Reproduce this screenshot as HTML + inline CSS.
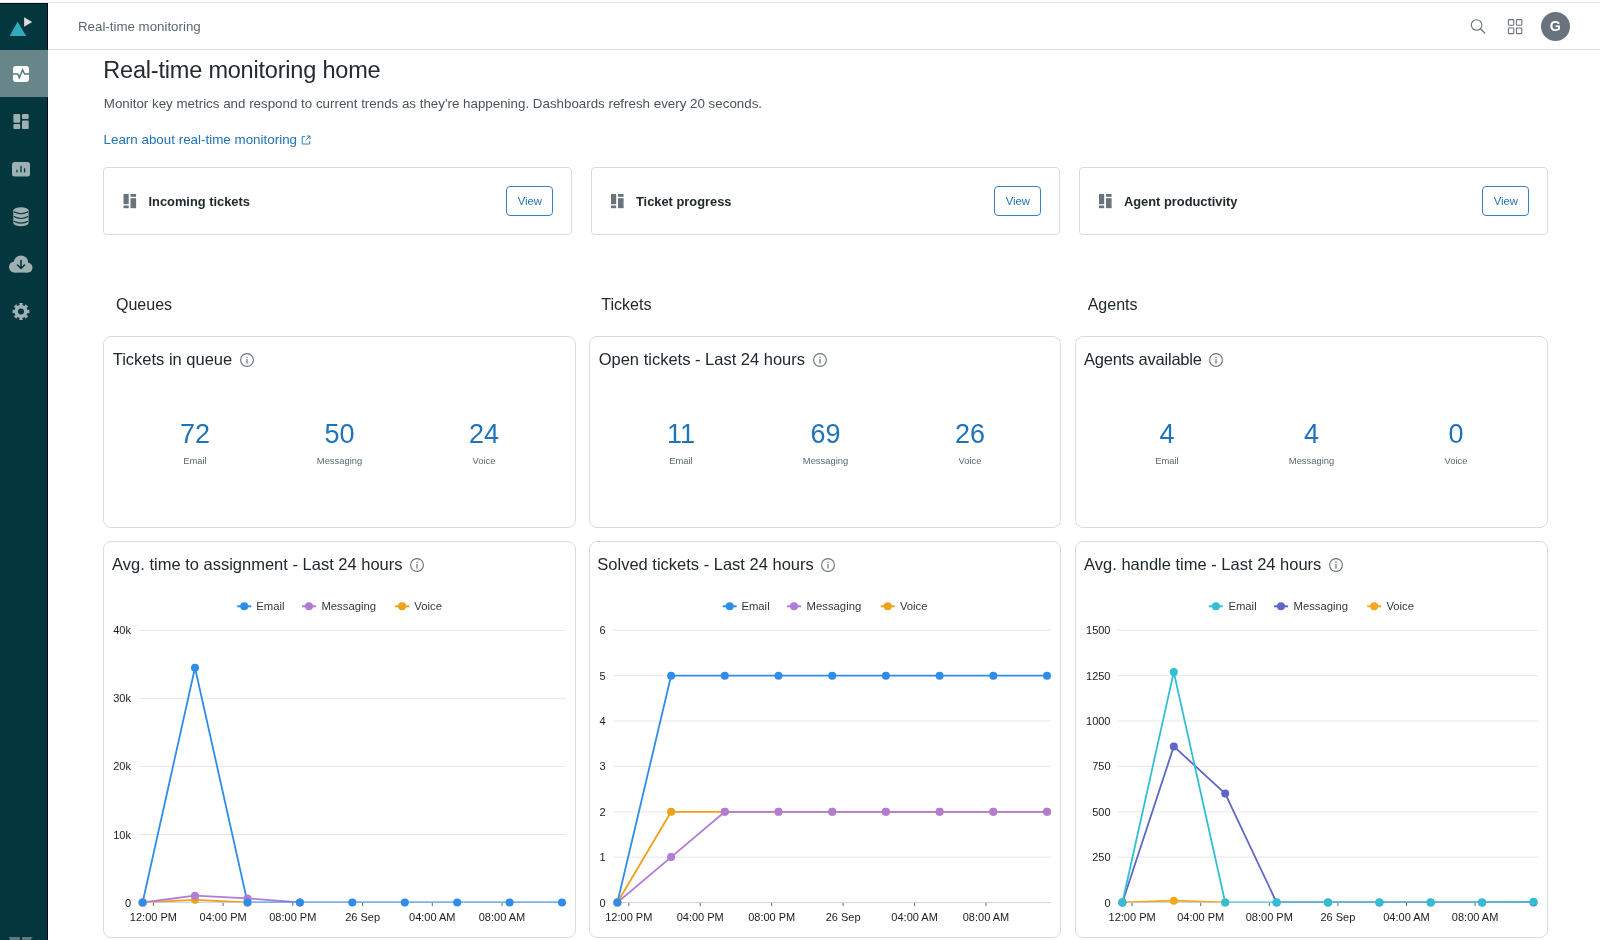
<!DOCTYPE html>
<html><head><meta charset="utf-8"><title>Real-time monitoring</title>
<style>
html,body{margin:0;padding:0;background:#fff;width:1600px;height:940px;overflow:hidden;font-family:"Liberation Sans", sans-serif;}
#root{position:relative;width:1600px;height:940px;overflow:hidden;will-change:transform;}
svg{position:absolute;left:0;top:0;}
</style></head><body><div id="root">
<div style="position:absolute;left:0px;top:2px;width:1600px;height:1px;box-sizing:border-box;background:#e4e7ea"></div>
<div style="position:absolute;left:0px;top:3px;width:48px;height:937px;box-sizing:border-box;background:#03363d;border-right:1px solid #020a18;border-top:1px solid #020e1a"></div>
<div style="position:absolute;left:0px;top:50px;width:48px;height:47px;box-sizing:border-box;background:#68868a"></div>
<div style="position:absolute;left:48px;top:49px;width:1552px;height:1px;box-sizing:border-box;background:#d8dcde"></div>
<div style="position:absolute;top:19.76px;font-size:13.3px;line-height:14.859px;color:#5c6970;font-weight:400;white-space:nowrap;left:78.00px;">Real-time monitoring</div>
<div style="position:absolute;top:57.13px;font-size:23.5px;line-height:26.254px;color:#232b31;font-weight:400;white-space:nowrap;letter-spacing:-0.2px;left:103.30px;">Real-time monitoring home</div>
<div style="position:absolute;top:96.71px;font-size:13.35px;line-height:14.915px;color:#49545c;font-weight:400;white-space:nowrap;left:103.80px;">Monitor key metrics and respond to current trends as they're happening. Dashboards refresh every 20 seconds.</div>
<div style="position:absolute;top:132.77px;font-size:13.4px;line-height:14.970px;color:#1f73b7;font-weight:400;white-space:nowrap;left:103.50px;">Learn about real-time monitoring</div>
<div style="position:absolute;left:103px;top:167px;width:469px;height:68px;box-sizing:border-box;border:1px solid #d8dcde;border-radius:4px"></div>
<div style="position:absolute;top:195.17px;font-size:12.85px;line-height:14.356px;color:#21292e;font-weight:700;white-space:nowrap;left:148.50px;">Incoming tickets</div>
<div style="position:absolute;left:506px;top:186px;width:47px;height:30px;box-sizing:border-box;border:1px solid #3b80c2;border-radius:4px"></div>
<div style="position:absolute;top:194.87px;font-size:11.3px;line-height:12.624px;color:#1f73b7;font-weight:400;white-space:nowrap;left:229.80px;width:600px;text-align:center;">View</div>
<div style="position:absolute;left:591px;top:167px;width:469px;height:68px;box-sizing:border-box;border:1px solid #d8dcde;border-radius:4px"></div>
<div style="position:absolute;top:195.17px;font-size:12.85px;line-height:14.356px;color:#21292e;font-weight:700;white-space:nowrap;left:636.00px;">Ticket progress</div>
<div style="position:absolute;left:994px;top:186px;width:47px;height:30px;box-sizing:border-box;border:1px solid #3b80c2;border-radius:4px"></div>
<div style="position:absolute;top:194.87px;font-size:11.3px;line-height:12.624px;color:#1f73b7;font-weight:400;white-space:nowrap;left:717.80px;width:600px;text-align:center;">View</div>
<div style="position:absolute;left:1079px;top:167px;width:469px;height:68px;box-sizing:border-box;border:1px solid #d8dcde;border-radius:4px"></div>
<div style="position:absolute;top:195.17px;font-size:12.85px;line-height:14.356px;color:#21292e;font-weight:700;white-space:nowrap;left:1124.00px;">Agent productivity</div>
<div style="position:absolute;left:1482px;top:186px;width:47px;height:30px;box-sizing:border-box;border:1px solid #3b80c2;border-radius:4px"></div>
<div style="position:absolute;top:194.87px;font-size:11.3px;line-height:12.624px;color:#1f73b7;font-weight:400;white-space:nowrap;left:1205.80px;width:600px;text-align:center;">View</div>
<div style="position:absolute;top:295.62px;font-size:16px;line-height:17.875px;color:#21292e;font-weight:400;white-space:nowrap;left:116.00px;">Queues</div>
<div style="position:absolute;top:295.62px;font-size:16px;line-height:17.875px;color:#21292e;font-weight:400;white-space:nowrap;left:601.30px;">Tickets</div>
<div style="position:absolute;top:295.62px;font-size:16px;line-height:17.875px;color:#21292e;font-weight:400;white-space:nowrap;left:1087.70px;">Agents</div>
<div style="position:absolute;left:103px;top:336px;width:473px;height:192px;box-sizing:border-box;border:1px solid #d8dcde;border-radius:8px"></div>
<div style="position:absolute;top:349.56px;font-size:16.5px;line-height:18.434px;color:#21292e;font-weight:400;white-space:nowrap;left:112.70px;">Tickets in queue<svg width="14" height="14" viewBox="0 0 14 14" style="position:relative;display:inline-block;vertical-align:-2.2px;margin-left:7.6px"><circle cx="7" cy="7" r="6.4" fill="none" stroke="#68737d" stroke-width="1.1"/><rect x="6.4" y="6" width="1.2" height="4.6" fill="#68737d"/><circle cx="7" cy="4.2" r="0.75" fill="#68737d"/></svg></div>
<div style="position:absolute;top:419.26px;font-size:27px;line-height:30.164px;color:#1f73b7;font-weight:400;white-space:nowrap;left:-105.00px;width:600px;text-align:center;">72</div>
<div style="position:absolute;top:456.49px;font-size:9.4px;line-height:10.502px;color:#5c6970;font-weight:400;white-space:nowrap;left:-105.00px;width:600px;text-align:center;">Email</div>
<div style="position:absolute;top:419.26px;font-size:27px;line-height:30.164px;color:#1f73b7;font-weight:400;white-space:nowrap;left:39.50px;width:600px;text-align:center;">50</div>
<div style="position:absolute;top:456.49px;font-size:9.4px;line-height:10.502px;color:#5c6970;font-weight:400;white-space:nowrap;left:39.50px;width:600px;text-align:center;">Messaging</div>
<div style="position:absolute;top:419.26px;font-size:27px;line-height:30.164px;color:#1f73b7;font-weight:400;white-space:nowrap;left:184.00px;width:600px;text-align:center;">24</div>
<div style="position:absolute;top:456.49px;font-size:9.4px;line-height:10.502px;color:#5c6970;font-weight:400;white-space:nowrap;left:184.00px;width:600px;text-align:center;">Voice</div>
<div style="position:absolute;left:589px;top:336px;width:472px;height:192px;box-sizing:border-box;border:1px solid #d8dcde;border-radius:8px"></div>
<div style="position:absolute;top:349.56px;font-size:16.5px;line-height:18.434px;color:#21292e;font-weight:400;white-space:nowrap;left:598.70px;">Open tickets - Last 24 hours<svg width="14" height="14" viewBox="0 0 14 14" style="position:relative;display:inline-block;vertical-align:-2.2px;margin-left:7.6px"><circle cx="7" cy="7" r="6.4" fill="none" stroke="#68737d" stroke-width="1.1"/><rect x="6.4" y="6" width="1.2" height="4.6" fill="#68737d"/><circle cx="7" cy="4.2" r="0.75" fill="#68737d"/></svg></div>
<div style="position:absolute;top:419.26px;font-size:27px;line-height:30.164px;color:#1f73b7;font-weight:400;white-space:nowrap;left:381.00px;width:600px;text-align:center;">11</div>
<div style="position:absolute;top:456.49px;font-size:9.4px;line-height:10.502px;color:#5c6970;font-weight:400;white-space:nowrap;left:381.00px;width:600px;text-align:center;">Email</div>
<div style="position:absolute;top:419.26px;font-size:27px;line-height:30.164px;color:#1f73b7;font-weight:400;white-space:nowrap;left:525.50px;width:600px;text-align:center;">69</div>
<div style="position:absolute;top:456.49px;font-size:9.4px;line-height:10.502px;color:#5c6970;font-weight:400;white-space:nowrap;left:525.50px;width:600px;text-align:center;">Messaging</div>
<div style="position:absolute;top:419.26px;font-size:27px;line-height:30.164px;color:#1f73b7;font-weight:400;white-space:nowrap;left:670.00px;width:600px;text-align:center;">26</div>
<div style="position:absolute;top:456.49px;font-size:9.4px;line-height:10.502px;color:#5c6970;font-weight:400;white-space:nowrap;left:670.00px;width:600px;text-align:center;">Voice</div>
<div style="position:absolute;left:1075px;top:336px;width:473px;height:192px;box-sizing:border-box;border:1px solid #d8dcde;border-radius:8px"></div>
<div style="position:absolute;top:349.56px;font-size:16.5px;line-height:18.434px;color:#21292e;font-weight:400;white-space:nowrap;letter-spacing:-0.2px;left:1083.90px;">Agents available<svg width="14" height="14" viewBox="0 0 14 14" style="position:relative;display:inline-block;vertical-align:-2.2px;margin-left:7.6px"><circle cx="7" cy="7" r="6.4" fill="none" stroke="#68737d" stroke-width="1.1"/><rect x="6.4" y="6" width="1.2" height="4.6" fill="#68737d"/><circle cx="7" cy="4.2" r="0.75" fill="#68737d"/></svg></div>
<div style="position:absolute;top:419.26px;font-size:27px;line-height:30.164px;color:#1f73b7;font-weight:400;white-space:nowrap;left:867.00px;width:600px;text-align:center;">4</div>
<div style="position:absolute;top:456.49px;font-size:9.4px;line-height:10.502px;color:#5c6970;font-weight:400;white-space:nowrap;left:867.00px;width:600px;text-align:center;">Email</div>
<div style="position:absolute;top:419.26px;font-size:27px;line-height:30.164px;color:#1f73b7;font-weight:400;white-space:nowrap;left:1011.50px;width:600px;text-align:center;">4</div>
<div style="position:absolute;top:456.49px;font-size:9.4px;line-height:10.502px;color:#5c6970;font-weight:400;white-space:nowrap;left:1011.50px;width:600px;text-align:center;">Messaging</div>
<div style="position:absolute;top:419.26px;font-size:27px;line-height:30.164px;color:#1f73b7;font-weight:400;white-space:nowrap;left:1156.00px;width:600px;text-align:center;">0</div>
<div style="position:absolute;top:456.49px;font-size:9.4px;line-height:10.502px;color:#5c6970;font-weight:400;white-space:nowrap;left:1156.00px;width:600px;text-align:center;">Voice</div>
<div style="position:absolute;left:103px;top:541px;width:473px;height:397px;box-sizing:border-box;border:1px solid #d8dcde;border-radius:8px"></div>
<div style="position:absolute;left:589px;top:541px;width:472px;height:397px;box-sizing:border-box;border:1px solid #d8dcde;border-radius:8px"></div>
<div style="position:absolute;left:1075px;top:541px;width:473px;height:397px;box-sizing:border-box;border:1px solid #d8dcde;border-radius:8px"></div>
<div style="position:absolute;top:554.56px;font-size:16.5px;line-height:18.434px;color:#21292e;font-weight:400;white-space:nowrap;left:112.10px;">Avg. time to assignment - Last 24 hours<svg width="14" height="14" viewBox="0 0 14 14" style="position:relative;display:inline-block;vertical-align:-2.2px;margin-left:7.6px"><circle cx="7" cy="7" r="6.4" fill="none" stroke="#68737d" stroke-width="1.1"/><rect x="6.4" y="6" width="1.2" height="4.6" fill="#68737d"/><circle cx="7" cy="4.2" r="0.75" fill="#68737d"/></svg></div>
<div style="position:absolute;top:554.56px;font-size:16.5px;line-height:18.434px;color:#21292e;font-weight:400;white-space:nowrap;left:597.30px;">Solved tickets - Last 24 hours<svg width="14" height="14" viewBox="0 0 14 14" style="position:relative;display:inline-block;vertical-align:-2.2px;margin-left:7.6px"><circle cx="7" cy="7" r="6.4" fill="none" stroke="#68737d" stroke-width="1.1"/><rect x="6.4" y="6" width="1.2" height="4.6" fill="#68737d"/><circle cx="7" cy="4.2" r="0.75" fill="#68737d"/></svg></div>
<div style="position:absolute;top:554.56px;font-size:16.5px;line-height:18.434px;color:#21292e;font-weight:400;white-space:nowrap;left:1084.10px;">Avg. handle time - Last 24 hours<svg width="14" height="14" viewBox="0 0 14 14" style="position:relative;display:inline-block;vertical-align:-2.2px;margin-left:7.6px"><circle cx="7" cy="7" r="6.4" fill="none" stroke="#68737d" stroke-width="1.1"/><rect x="6.4" y="6" width="1.2" height="4.6" fill="#68737d"/><circle cx="7" cy="4.2" r="0.75" fill="#68737d"/></svg></div>
<svg width="1600" height="940" viewBox="0 0 1600 940">
<path d="M9.6 36 L26.2 36 L17.6 21.7 Z" fill="#30aabc"/>
<path d="M24.1 17.2 L32.2 22 L24.1 26.8 Z" fill="#d8dcde"/>
<rect x="13" y="66" width="16" height="16" rx="3" fill="#fff"/>
<path d="M13 74 H17.8 L19.3 77.8 L22.6 69.9 L24.6 74 H29" fill="none" stroke="#587a7e" stroke-width="1.5" stroke-linejoin="miter"/>
<g fill="#9eb0b3"><rect x="13.4" y="114" width="6.8" height="8.7" rx="1"/><rect x="13.4" y="124" width="6.8" height="5" rx="1"/><rect x="22" y="114" width="6.7" height="5" rx="1"/><rect x="22" y="120.6" width="6.7" height="8.4" rx="1"/></g>
<rect x="12" y="162" width="18" height="14.6" rx="2.5" fill="#9eb0b3"/>
<g fill="#03363d"><rect x="16.3" y="169.8" width="1.3" height="2.6"/><rect x="20.3" y="165.9" width="1.3" height="6.5"/><rect x="23.9" y="168.3" width="1.3" height="4.1"/></g>
<path d="M13.3 210.5 A7.65 3.2 0 0 1 28.6 210.5 V223 A7.65 3.2 0 0 1 13.3 223 Z" fill="#9eb0b3"/>
<g fill="none" stroke="#03363d" stroke-width="1.1"><path d="M13.8 211.8 Q21 215.6 28.1 211.8"/><path d="M13.8 216.6 Q21 220.4 28.1 216.6"/><path d="M13.8 221.2 Q21 225 28.1 221.2"/></g>
<g fill="#9eb0b3"><circle cx="21" cy="262.6" r="7.2"/><circle cx="14.6" cy="267" r="5.6"/><circle cx="27.6" cy="267.7" r="4.9"/><rect x="14.6" y="265" width="13" height="7.6"/></g>
<path d="M21 260.5 V268.5 M17.5 265 L21 268.5 L24.5 265" fill="none" stroke="#03363d" stroke-width="1.6" stroke-linecap="round" stroke-linejoin="round"/>
<path d="M29.41 309.71 L29.41 313.29 L27.44 312.93 L26.57 315.05 L28.21 316.18 L25.68 318.71 L24.55 317.07 L22.43 317.94 L22.79 319.91 L19.21 319.91 L19.57 317.94 L17.45 317.07 L16.32 318.71 L13.79 316.18 L15.43 315.05 L14.56 312.93 L12.59 313.29 L12.59 309.71 L14.56 310.07 L15.43 307.95 L13.79 306.82 L16.32 304.29 L17.45 305.93 L19.57 305.06 L19.21 303.09 L22.79 303.09 L22.43 305.06 L24.55 305.93 L25.68 304.29 L28.21 306.82 L26.57 307.95 L27.44 310.07 Z M24 311.5 A3 3 0 1 0 18 311.5 A3 3 0 1 0 24 311.5 Z" fill="#9eb0b3" fill-rule="evenodd"/>
<path d="M9 937 H20 V940 H10 Z M22 937 H33 L30.5 940 H22 Z" fill="#5a7a7e"/>
<circle cx="1476.6" cy="25" r="5.3" fill="none" stroke="#68737d" stroke-width="1.1"/><path d="M1480.5 29 L1484.8 33" stroke="#68737d" stroke-width="1.2" stroke-linecap="round"/>
<g fill="none" stroke="#68737d" stroke-width="1.05"><rect x="1508.4" y="19.6" width="5.4" height="5.6" rx="0.6"/><rect x="1516.4" y="19.6" width="5.4" height="5.6" rx="0.6"/><rect x="1508.4" y="28" width="5.4" height="5.6" rx="0.6"/><rect x="1516.4" y="28" width="5.4" height="5.6" rx="0.6"/></g>
<circle cx="1555.5" cy="26.5" r="14.5" fill="#68737d"/>
<text x="1555.3" y="31.1" text-anchor="middle" font-family='"Liberation Sans", sans-serif' font-size="14.2" font-weight="700" fill="#fff">G</text>
<g fill="none" stroke="#1f73b7" stroke-width="0.9"><path d="M305.2 136.6 H302.2 V144 H309.6 V141.2"/><path d="M306.8 136 H310 V139.2 M310 136 L305.6 140.4"/></g>
<g fill="#68737d"><rect x="123.5" y="194" width="5.2" height="10.2" /><rect x="123.5" y="205.5" width="5.2" height="2.7"/><rect x="130.5" y="194" width="5.6" height="2.8"/><rect x="130.5" y="198.2" width="5.6" height="10"/></g>
<g fill="#68737d"><rect x="611.0" y="194" width="5.2" height="10.2" /><rect x="611.0" y="205.5" width="5.2" height="2.7"/><rect x="618.0" y="194" width="5.6" height="2.8"/><rect x="618.0" y="198.2" width="5.6" height="10"/></g>
<g fill="#68737d"><rect x="1099.0" y="194" width="5.2" height="10.2" /><rect x="1099.0" y="205.5" width="5.2" height="2.7"/><rect x="1106.0" y="194" width="5.6" height="2.8"/><rect x="1106.0" y="198.2" width="5.6" height="10"/></g>
<path d="M237.2 606.3 H251.2" stroke="#2f8de9" stroke-width="2"/><circle cx="244.2" cy="606.3" r="4" fill="#2f8de9"/>
<text x="256.3" y="610.4" font-family='"Liberation Sans", sans-serif' font-size="11.3" fill="#2f3941">Email</text>
<path d="M302 606.3 H316" stroke="#b07cd8" stroke-width="2"/><circle cx="309" cy="606.3" r="4" fill="#b07cd8"/>
<text x="321.4" y="610.4" font-family='"Liberation Sans", sans-serif' font-size="11.3" fill="#2f3941">Messaging</text>
<path d="M395.1 606.3 H409.1" stroke="#eda21a" stroke-width="2"/><circle cx="402.1" cy="606.3" r="4" fill="#eda21a"/>
<text x="414.3" y="610.4" font-family='"Liberation Sans", sans-serif' font-size="11.3" fill="#2f3941">Voice</text>
<path d="M139.1 630.3 H565.7" stroke="#e6e6e6" stroke-width="1"/>
<text x="131" y="634.3" text-anchor="end" font-family='"Liberation Sans", sans-serif' font-size="11" fill="#222">40k</text>
<path d="M139.1 698.3 H565.7" stroke="#e6e6e6" stroke-width="1"/>
<text x="131" y="702.3" text-anchor="end" font-family='"Liberation Sans", sans-serif' font-size="11" fill="#222">30k</text>
<path d="M139.1 766.4 H565.7" stroke="#e6e6e6" stroke-width="1"/>
<text x="131" y="770.4" text-anchor="end" font-family='"Liberation Sans", sans-serif' font-size="11" fill="#222">20k</text>
<path d="M139.1 834.5 H565.7" stroke="#e6e6e6" stroke-width="1"/>
<text x="131" y="838.5" text-anchor="end" font-family='"Liberation Sans", sans-serif' font-size="11" fill="#222">10k</text>
<path d="M139.1 902.5 H565.7" stroke="#ccd6eb" stroke-width="1"/>
<text x="131" y="906.5" text-anchor="end" font-family='"Liberation Sans", sans-serif' font-size="11" fill="#222">0</text>
<path d="M153.4 903 V906" stroke="#666" stroke-width="1"/>
<text x="153.4" y="920.8" text-anchor="middle" font-family='"Liberation Sans", sans-serif' font-size="11" fill="#222">12:00 PM</text>
<path d="M223.1 903 V906" stroke="#666" stroke-width="1"/>
<text x="223.1" y="920.8" text-anchor="middle" font-family='"Liberation Sans", sans-serif' font-size="11" fill="#222">04:00 PM</text>
<path d="M292.8 903 V906" stroke="#666" stroke-width="1"/>
<text x="292.8" y="920.8" text-anchor="middle" font-family='"Liberation Sans", sans-serif' font-size="11" fill="#222">08:00 PM</text>
<path d="M362.6 903 V906" stroke="#666" stroke-width="1"/>
<text x="362.6" y="920.8" text-anchor="middle" font-family='"Liberation Sans", sans-serif' font-size="11" fill="#222">26 Sep</text>
<path d="M432.3 903 V906" stroke="#666" stroke-width="1"/>
<text x="432.3" y="920.8" text-anchor="middle" font-family='"Liberation Sans", sans-serif' font-size="11" fill="#222">04:00 AM</text>
<path d="M502.0 903 V906" stroke="#666" stroke-width="1"/>
<text x="502.0" y="920.8" text-anchor="middle" font-family='"Liberation Sans", sans-serif' font-size="11" fill="#222">08:00 AM</text>
<clipPath id="clip103"><rect x="139.1" y="600" width="426.6" height="302.5"/></clipPath>
<g clip-path="url(#clip103)">
<path d="M142.6 902.5 L195.0 899.8 L247.5 902.5" fill="none" stroke="#eda21a" stroke-width="1.8" stroke-linejoin="round" stroke-linecap="round"/>
<path d="M142.6 902.5 L195.0 895.7 L247.5 898.4 L299.9 902.5" fill="none" stroke="#b07cd8" stroke-width="1.8" stroke-linejoin="round" stroke-linecap="round"/>
<path d="M142.6 902.5 L195.0 667.7 L247.5 902.5 L299.9 902.5 L352.3 902.5 L404.8 902.5 L457.2 902.5 L509.6 902.5 L562.0 902.5" fill="none" stroke="#2f8de9" stroke-width="1.8" stroke-linejoin="round" stroke-linecap="round"/>
</g>
<circle cx="142.6" cy="902.5" r="4" fill="#eda21a"/>
<circle cx="195.0" cy="899.8" r="4" fill="#eda21a"/>
<circle cx="247.5" cy="902.5" r="4" fill="#eda21a"/>
<circle cx="142.6" cy="902.5" r="4" fill="#b07cd8"/>
<circle cx="195.0" cy="895.7" r="4" fill="#b07cd8"/>
<circle cx="247.5" cy="898.4" r="4" fill="#b07cd8"/>
<circle cx="299.9" cy="902.5" r="4" fill="#b07cd8"/>
<circle cx="142.6" cy="902.5" r="4" fill="#2f8de9"/>
<circle cx="195.0" cy="667.7" r="4" fill="#2f8de9"/>
<circle cx="247.5" cy="902.5" r="4" fill="#2f8de9"/>
<circle cx="299.9" cy="902.5" r="4" fill="#2f8de9"/>
<circle cx="352.3" cy="902.5" r="4" fill="#2f8de9"/>
<circle cx="404.8" cy="902.5" r="4" fill="#2f8de9"/>
<circle cx="457.2" cy="902.5" r="4" fill="#2f8de9"/>
<circle cx="509.6" cy="902.5" r="4" fill="#2f8de9"/>
<circle cx="562.0" cy="902.5" r="4" fill="#2f8de9"/>
<path d="M722.7 606.3 H736.7" stroke="#2f8de9" stroke-width="2"/><circle cx="729.7" cy="606.3" r="4" fill="#2f8de9"/>
<text x="741.4" y="610.4" font-family='"Liberation Sans", sans-serif' font-size="11.3" fill="#2f3941">Email</text>
<path d="M787 606.3 H801" stroke="#b07cd8" stroke-width="2"/><circle cx="794" cy="606.3" r="4" fill="#b07cd8"/>
<text x="806.6" y="610.4" font-family='"Liberation Sans", sans-serif' font-size="11.3" fill="#2f3941">Messaging</text>
<path d="M880.7 606.3 H894.7" stroke="#eda21a" stroke-width="2"/><circle cx="887.7" cy="606.3" r="4" fill="#eda21a"/>
<text x="899.9" y="610.4" font-family='"Liberation Sans", sans-serif' font-size="11.3" fill="#2f3941">Voice</text>
<path d="M613.5 630.3 H1051.2" stroke="#e6e6e6" stroke-width="1"/>
<text x="605.5" y="634.3" text-anchor="end" font-family='"Liberation Sans", sans-serif' font-size="11" fill="#222">6</text>
<path d="M613.5 675.7 H1051.2" stroke="#e6e6e6" stroke-width="1"/>
<text x="605.5" y="679.7" text-anchor="end" font-family='"Liberation Sans", sans-serif' font-size="11" fill="#222">5</text>
<path d="M613.5 721.0 H1051.2" stroke="#e6e6e6" stroke-width="1"/>
<text x="605.5" y="725.0" text-anchor="end" font-family='"Liberation Sans", sans-serif' font-size="11" fill="#222">4</text>
<path d="M613.5 766.4 H1051.2" stroke="#e6e6e6" stroke-width="1"/>
<text x="605.5" y="770.4" text-anchor="end" font-family='"Liberation Sans", sans-serif' font-size="11" fill="#222">3</text>
<path d="M613.5 811.8 H1051.2" stroke="#e6e6e6" stroke-width="1"/>
<text x="605.5" y="815.8" text-anchor="end" font-family='"Liberation Sans", sans-serif' font-size="11" fill="#222">2</text>
<path d="M613.5 857.1 H1051.2" stroke="#e6e6e6" stroke-width="1"/>
<text x="605.5" y="861.1" text-anchor="end" font-family='"Liberation Sans", sans-serif' font-size="11" fill="#222">1</text>
<path d="M613.5 902.5 H1051.2" stroke="#ccd6eb" stroke-width="1"/>
<text x="605.5" y="906.5" text-anchor="end" font-family='"Liberation Sans", sans-serif' font-size="11" fill="#222">0</text>
<path d="M628.8 903 V906" stroke="#666" stroke-width="1"/>
<text x="628.8" y="920.8" text-anchor="middle" font-family='"Liberation Sans", sans-serif' font-size="11" fill="#222">12:00 PM</text>
<path d="M700.2 903 V906" stroke="#666" stroke-width="1"/>
<text x="700.2" y="920.8" text-anchor="middle" font-family='"Liberation Sans", sans-serif' font-size="11" fill="#222">04:00 PM</text>
<path d="M771.7 903 V906" stroke="#666" stroke-width="1"/>
<text x="771.7" y="920.8" text-anchor="middle" font-family='"Liberation Sans", sans-serif' font-size="11" fill="#222">08:00 PM</text>
<path d="M843.1 903 V906" stroke="#666" stroke-width="1"/>
<text x="843.1" y="920.8" text-anchor="middle" font-family='"Liberation Sans", sans-serif' font-size="11" fill="#222">26 Sep</text>
<path d="M914.6 903 V906" stroke="#666" stroke-width="1"/>
<text x="914.6" y="920.8" text-anchor="middle" font-family='"Liberation Sans", sans-serif' font-size="11" fill="#222">04:00 AM</text>
<path d="M986.0 903 V906" stroke="#666" stroke-width="1"/>
<text x="986.0" y="920.8" text-anchor="middle" font-family='"Liberation Sans", sans-serif' font-size="11" fill="#222">08:00 AM</text>
<clipPath id="clip589"><rect x="613.5" y="600" width="437.70000000000005" height="302.5"/></clipPath>
<g clip-path="url(#clip589)">
<path d="M617.4 902.5 L671.1 811.8 L724.8 811.8 L778.5 811.8 L832.2 811.8 L885.9 811.8 L939.6 811.8 L993.3 811.8 L1047.0 811.8" fill="none" stroke="#eda21a" stroke-width="1.8" stroke-linejoin="round" stroke-linecap="round"/>
<path d="M617.4 902.5 L671.1 857.1 L724.8 811.8 L778.5 811.8 L832.2 811.8 L885.9 811.8 L939.6 811.8 L993.3 811.8 L1047.0 811.8" fill="none" stroke="#b07cd8" stroke-width="1.8" stroke-linejoin="round" stroke-linecap="round"/>
<path d="M617.4 902.5 L671.1 675.7 L724.8 675.7 L778.5 675.7 L832.2 675.7 L885.9 675.7 L939.6 675.7 L993.3 675.7 L1047.0 675.7" fill="none" stroke="#2f8de9" stroke-width="1.8" stroke-linejoin="round" stroke-linecap="round"/>
</g>
<circle cx="617.4" cy="902.5" r="4" fill="#eda21a"/>
<circle cx="671.1" cy="811.8" r="4" fill="#eda21a"/>
<circle cx="724.8" cy="811.8" r="4" fill="#eda21a"/>
<circle cx="778.5" cy="811.8" r="4" fill="#eda21a"/>
<circle cx="832.2" cy="811.8" r="4" fill="#eda21a"/>
<circle cx="885.9" cy="811.8" r="4" fill="#eda21a"/>
<circle cx="939.6" cy="811.8" r="4" fill="#eda21a"/>
<circle cx="993.3" cy="811.8" r="4" fill="#eda21a"/>
<circle cx="1047.0" cy="811.8" r="4" fill="#eda21a"/>
<circle cx="617.4" cy="902.5" r="4" fill="#b07cd8"/>
<circle cx="671.1" cy="857.1" r="4" fill="#b07cd8"/>
<circle cx="724.8" cy="811.8" r="4" fill="#b07cd8"/>
<circle cx="778.5" cy="811.8" r="4" fill="#b07cd8"/>
<circle cx="832.2" cy="811.8" r="4" fill="#b07cd8"/>
<circle cx="885.9" cy="811.8" r="4" fill="#b07cd8"/>
<circle cx="939.6" cy="811.8" r="4" fill="#b07cd8"/>
<circle cx="993.3" cy="811.8" r="4" fill="#b07cd8"/>
<circle cx="1047.0" cy="811.8" r="4" fill="#b07cd8"/>
<circle cx="617.4" cy="902.5" r="4" fill="#2f8de9"/>
<circle cx="671.1" cy="675.7" r="4" fill="#2f8de9"/>
<circle cx="724.8" cy="675.7" r="4" fill="#2f8de9"/>
<circle cx="778.5" cy="675.7" r="4" fill="#2f8de9"/>
<circle cx="832.2" cy="675.7" r="4" fill="#2f8de9"/>
<circle cx="885.9" cy="675.7" r="4" fill="#2f8de9"/>
<circle cx="939.6" cy="675.7" r="4" fill="#2f8de9"/>
<circle cx="993.3" cy="675.7" r="4" fill="#2f8de9"/>
<circle cx="1047.0" cy="675.7" r="4" fill="#2f8de9"/>
<path d="M1208.8 606.3 H1222.8" stroke="#33bfd3" stroke-width="2"/><circle cx="1215.8" cy="606.3" r="4" fill="#33bfd3"/>
<text x="1228.4" y="610.4" font-family='"Liberation Sans", sans-serif' font-size="11.3" fill="#2f3941">Email</text>
<path d="M1274 606.3 H1288" stroke="#5c67c7" stroke-width="2"/><circle cx="1281" cy="606.3" r="4" fill="#5c67c7"/>
<text x="1293.5" y="610.4" font-family='"Liberation Sans", sans-serif' font-size="11.3" fill="#2f3941">Messaging</text>
<path d="M1367.2 606.3 H1381.2" stroke="#f5a623" stroke-width="2"/><circle cx="1374.2" cy="606.3" r="4" fill="#f5a623"/>
<text x="1386.4" y="610.4" font-family='"Liberation Sans", sans-serif' font-size="11.3" fill="#2f3941">Voice</text>
<path d="M1118 630.3 H1537.7" stroke="#e6e6e6" stroke-width="1"/>
<text x="1110.5" y="634.3" text-anchor="end" font-family='"Liberation Sans", sans-serif' font-size="11" fill="#222">1500</text>
<path d="M1118 675.7 H1537.7" stroke="#e6e6e6" stroke-width="1"/>
<text x="1110.5" y="679.7" text-anchor="end" font-family='"Liberation Sans", sans-serif' font-size="11" fill="#222">1250</text>
<path d="M1118 721.0 H1537.7" stroke="#e6e6e6" stroke-width="1"/>
<text x="1110.5" y="725.0" text-anchor="end" font-family='"Liberation Sans", sans-serif' font-size="11" fill="#222">1000</text>
<path d="M1118 766.4 H1537.7" stroke="#e6e6e6" stroke-width="1"/>
<text x="1110.5" y="770.4" text-anchor="end" font-family='"Liberation Sans", sans-serif' font-size="11" fill="#222">750</text>
<path d="M1118 811.8 H1537.7" stroke="#e6e6e6" stroke-width="1"/>
<text x="1110.5" y="815.8" text-anchor="end" font-family='"Liberation Sans", sans-serif' font-size="11" fill="#222">500</text>
<path d="M1118 857.1 H1537.7" stroke="#e6e6e6" stroke-width="1"/>
<text x="1110.5" y="861.1" text-anchor="end" font-family='"Liberation Sans", sans-serif' font-size="11" fill="#222">250</text>
<path d="M1118 902.5 H1537.7" stroke="#ccd6eb" stroke-width="1"/>
<text x="1110.5" y="906.5" text-anchor="end" font-family='"Liberation Sans", sans-serif' font-size="11" fill="#222">0</text>
<path d="M1132.1 903 V906" stroke="#666" stroke-width="1"/>
<text x="1132.1" y="920.8" text-anchor="middle" font-family='"Liberation Sans", sans-serif' font-size="11" fill="#222">12:00 PM</text>
<path d="M1200.7 903 V906" stroke="#666" stroke-width="1"/>
<text x="1200.7" y="920.8" text-anchor="middle" font-family='"Liberation Sans", sans-serif' font-size="11" fill="#222">04:00 PM</text>
<path d="M1269.3 903 V906" stroke="#666" stroke-width="1"/>
<text x="1269.3" y="920.8" text-anchor="middle" font-family='"Liberation Sans", sans-serif' font-size="11" fill="#222">08:00 PM</text>
<path d="M1337.9 903 V906" stroke="#666" stroke-width="1"/>
<text x="1337.9" y="920.8" text-anchor="middle" font-family='"Liberation Sans", sans-serif' font-size="11" fill="#222">26 Sep</text>
<path d="M1406.5 903 V906" stroke="#666" stroke-width="1"/>
<text x="1406.5" y="920.8" text-anchor="middle" font-family='"Liberation Sans", sans-serif' font-size="11" fill="#222">04:00 AM</text>
<path d="M1475.1 903 V906" stroke="#666" stroke-width="1"/>
<text x="1475.1" y="920.8" text-anchor="middle" font-family='"Liberation Sans", sans-serif' font-size="11" fill="#222">08:00 AM</text>
<clipPath id="clip1075"><rect x="1118" y="600" width="419.70000000000005" height="302.5"/></clipPath>
<g clip-path="url(#clip1075)">
<path d="M1122.4 902.5 L1173.8 900.7 L1225.2 902.5" fill="none" stroke="#f5a623" stroke-width="1.8" stroke-linejoin="round" stroke-linecap="round"/>
<path d="M1122.4 902.5 L1173.8 746.4 L1225.2 793.6 L1276.6 902.5 L1328.0 902.5 L1379.4 902.5 L1430.7 902.5 L1482.1 902.5 L1533.5 902.5" fill="none" stroke="#5c67c7" stroke-width="1.8" stroke-linejoin="round" stroke-linecap="round"/>
<path d="M1122.4 902.5 L1173.8 672.0 L1225.2 902.5 L1276.6 902.5 L1328.0 902.5 L1379.4 902.5 L1430.7 902.5 L1482.1 902.5 L1533.5 901.8" fill="none" stroke="#33bfd3" stroke-width="1.8" stroke-linejoin="round" stroke-linecap="round"/>
</g>
<circle cx="1122.4" cy="902.5" r="4" fill="#f5a623"/>
<circle cx="1173.8" cy="900.7" r="4" fill="#f5a623"/>
<circle cx="1225.2" cy="902.5" r="4" fill="#f5a623"/>
<circle cx="1122.4" cy="902.5" r="4" fill="#5c67c7"/>
<circle cx="1173.8" cy="746.4" r="4" fill="#5c67c7"/>
<circle cx="1225.2" cy="793.6" r="4" fill="#5c67c7"/>
<circle cx="1276.6" cy="902.5" r="4" fill="#5c67c7"/>
<circle cx="1328.0" cy="902.5" r="4" fill="#5c67c7"/>
<circle cx="1379.4" cy="902.5" r="4" fill="#5c67c7"/>
<circle cx="1430.7" cy="902.5" r="4" fill="#5c67c7"/>
<circle cx="1482.1" cy="902.5" r="4" fill="#5c67c7"/>
<circle cx="1533.5" cy="902.5" r="4" fill="#5c67c7"/>
<circle cx="1122.4" cy="902.5" r="4" fill="#33bfd3"/>
<circle cx="1173.8" cy="672.0" r="4" fill="#33bfd3"/>
<circle cx="1225.2" cy="902.5" r="4" fill="#33bfd3"/>
<circle cx="1276.6" cy="902.5" r="4" fill="#33bfd3"/>
<circle cx="1328.0" cy="902.5" r="4" fill="#33bfd3"/>
<circle cx="1379.4" cy="902.5" r="4" fill="#33bfd3"/>
<circle cx="1430.7" cy="902.5" r="4" fill="#33bfd3"/>
<circle cx="1482.1" cy="902.5" r="4" fill="#33bfd3"/>
<circle cx="1533.5" cy="901.8" r="4" fill="#33bfd3"/>
</svg>
</div></body></html>
